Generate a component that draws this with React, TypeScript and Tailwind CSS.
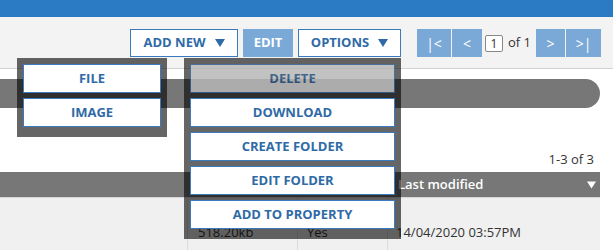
import React from "react";

function Caret({ className }: { className: string }) {
  return (
    <svg viewBox="0 0 10 8" className={className}>
      <polygon points="0,0 10,0 5,8" fill="currentColor" />
    </svg>
  );
}

const addItems = ["FILE", "IMAGE"];
const optionItems = ["DELETE", "DOWNLOAD", "CREATE FOLDER", "EDIT FOLDER", "ADD TO PROPERTY"];

function MenuButton({ label, disabled }: { label: string; disabled?: boolean }) {
  return (
    <div
      className={`h-[29px] flex items-center justify-center bg-white border border-[#3a7bbf] text-[13px] font-bold text-[#2f6aa6] ${
        disabled ? "opacity-60" : ""
      }`}
    >
      {label}
    </div>
  );
}

export default function App() {
  return (
    <div className="relative w-[613px] h-[250px] overflow-hidden bg-white font-['Open_Sans',sans-serif]">
      {/* top bar */}
      <div className="h-[17px] bg-[#2a7bc4]" />

      {/* toolbar */}
      <div className="h-[52px] bg-[#f3f3f3] border-b border-[#d2d2d2] flex items-start pt-[12px] pl-[130px]">
        <div className="flex gap-[5px]">
          <button className="w-[108px] h-[28px] bg-white border border-[#3a7bbf] flex items-center justify-center gap-[9px] text-[13px] font-bold text-[#2f6aa6]">
            ADD NEW
            <Caret className="w-[10px] h-[8px] text-[#2f6aa6]" />
          </button>
          <button className="w-[50px] h-[28px] bg-[#7aa9d8] flex items-center justify-center text-[13px] font-bold text-white">
            EDIT
          </button>
          <button className="w-[103px] h-[28px] bg-white border border-[#3a7bbf] flex items-center justify-center gap-[9px] text-[13px] font-bold text-[#2f6aa6]">
            OPTIONS
            <Caret className="w-[10px] h-[8px] text-[#2f6aa6]" />
          </button>
        </div>

        {/* pagination */}
        <div className="flex items-center ml-[16px] text-white text-[14px]">
          <div className="w-[34px] h-[28px] bg-[#7aa9d8] flex items-center justify-center">|&lt;</div>
          <div className="w-[30px] h-[28px] ml-px bg-[#7aa9d8] flex items-center justify-center">&lt;</div>
          <div className="ml-[3px] w-[18px] h-[17px] bg-white border border-[#888] rounded-[2px] text-[12px] leading-[15px] text-center text-[#333]">
            1
          </div>
          <span className="ml-[5px] text-[13px] text-[#333]">of 1</span>
          <div className="ml-[5px] w-[29px] h-[28px] bg-[#7aa9d8] flex items-center justify-center">&gt;</div>
          <div className="w-[35px] h-[28px] ml-px bg-[#7aa9d8] flex items-center justify-center">&gt;|</div>
        </div>
      </div>

      {/* search bar */}
      <div className="mt-[10px] h-[29px] w-[600px] rounded-r-full bg-[#777]" />

      {/* count */}
      <div className="mt-[42px] w-[600px] pr-[6px] h-[18px] leading-[18px] text-right text-[13px] text-[#333]">
        1-3 of 3
      </div>

      {/* table */}
      <div className="mt-[4px] w-[600px]">
        <div className="h-[25px] bg-[#777] flex items-center text-white text-[13px] font-semibold">
          <div className="w-[388px]" />
          <div className="flex-1 pl-[10px]">Last modified</div>
          <Caret className="w-[9px] h-[10px] mr-[4px] text-white" />
        </div>
        <div className="h-[60px] bg-[#f0f0f0] border-t border-[#d8d8d8] flex text-[13px] text-[#333]">
          <div className="w-[188px] border-r border-[#dcdcdc]" />
          <div className="w-[110px] border-r border-[#dcdcdc] pl-[10px] pt-[25px]">518.20kb</div>
          <div className="w-[90px] border-r border-[#dcdcdc] pl-[9px] pt-[25px]">Yes</div>
          <div className="flex-1 pl-[8px] pt-[25px]">14/04/2020 03:57PM</div>
        </div>
      </div>

      {/* add new menu */}
      <div className="absolute left-[17px] top-[58px] w-[150px] bg-black/60 px-[6px] pt-[6px] pb-[10px] flex flex-col gap-[5px]">
        {addItems.map((item) => (
          <MenuButton key={item} label={item} />
        ))}
      </div>

      {/* options menu */}
      <div className="absolute left-[184px] top-[58px] w-[217px] bg-black/60 px-[6px] pt-[6px] pb-[10px] flex flex-col gap-[5px]">
        {optionItems.map((item) => (
          <MenuButton key={item} label={item} disabled={item === "DELETE"} />
        ))}
      </div>
    </div>
  );
}
